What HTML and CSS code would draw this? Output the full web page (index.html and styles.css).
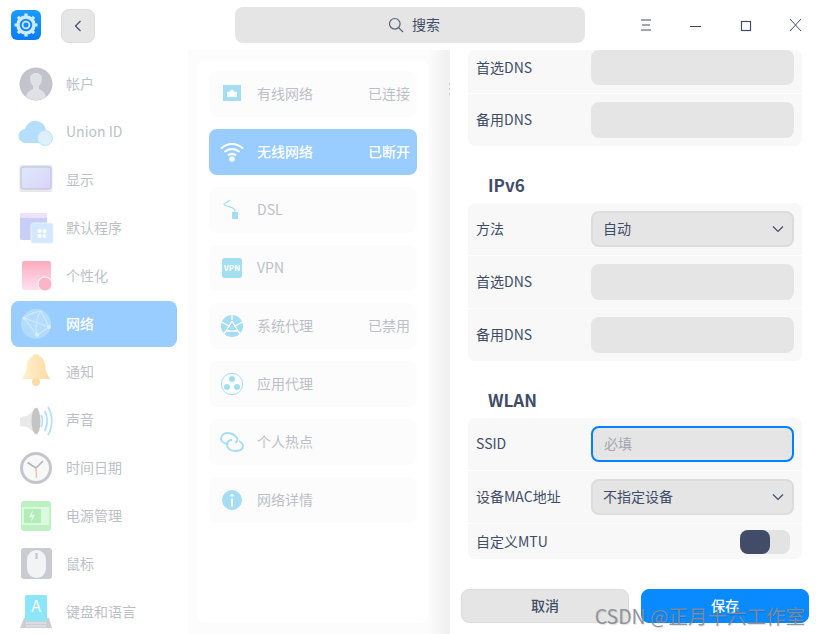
FILE: index.html
```html
<!DOCTYPE html>
<html lang="zh">
<head>
<meta charset="utf-8">
<title>控制中心</title>
<link rel="stylesheet" href="styles.css">
</head>
<body>
<div class="app">
  <header class="topbar">
    <svg class="logo" viewBox="0 0 30 30"><defs><linearGradient id="lg" x1="0" y1="0" x2="0" y2="1"><stop offset="0" stop-color="#1a9cff"/><stop offset="1" stop-color="#0a7cf5"/></linearGradient></defs><rect width="30" height="30" rx="6" fill="url(#lg)"/><g fill="none" stroke="#cfe9ff"><circle cx="15" cy="15" r="8" stroke-width="3.5"/><circle cx="15" cy="15" r="3.4" stroke-width="1.8"/><path d="M15 3.5v4M15 22.500v4M3.500 15h4M22.500 15h4M6.900 6.900l2.800 2.800M20.300 20.300l2.800 2.800M23.100 6.900l-2.800 2.800M9.700 20.300l-2.800 2.800" stroke-width="3.200"/></g></svg>
    <button class="back"><svg width="8" height="12" viewBox="0 0 8 12"><path d="M6.500 1L1.500 6l5 5" fill="none" stroke="#414d68" stroke-width="1.200"/></svg></button>
    <div class="search">
      <svg width="16" height="16" viewBox="0 0 16 16"><circle cx="6.800" cy="6.800" r="5.300" fill="none" stroke="#526078" stroke-width="1.200"/><path d="M10.600 10.600l4.400 4.400" stroke="#526078" stroke-width="1.200"/></svg>
      <span>搜索</span>
    </div>
    <div class="winbtns">
      <svg class="win" viewBox="0 0 50 20"><path d="M20 5h10M21 10h8M20 15h10" stroke="#414d68" fill="none"/></svg>
      <svg class="win" viewBox="0 0 50 20"><path d="M19 11.500h11" stroke="#414d68" fill="none"/></svg>
      <svg class="win" viewBox="0 0 50 20"><rect x="20.500" y="6.500" width="9" height="9" stroke="#414d68" stroke-width="1.200" fill="none"/></svg>
      <svg class="win" viewBox="0 0 50 20"><path d="M19 4l11 12M30 4L19 16" stroke="#414d68" fill="none"/></svg>
    </div>
  </header>
  <div class="body">
    <nav class="side">
      <div class="nav-item"><svg class="nav-ico" viewBox="0 0 36 36"><circle cx="18" cy="18" r="16.500" fill="#c3c4cb"/><path d="M8 31c1-6 5-7 7-8v-3c-2-2-3-5-3-8 0-3 3-5 6-5s6 2 6 5c0 3-1 6-3 8v3c2 1 6 2 7 8-3 2-6 3-10 3s-7-1-10-3z" fill="#e0e1e6"/></svg><span>帐户</span></div>
      <div class="nav-item"><svg class="nav-ico" viewBox="0 0 36 36"><path d="M8 29a7 7 0 0 1-1-14c2-6 7-9 12-8 5 1 9 5 9 10v12z" fill="#b4defb"/><circle cx="27" cy="24" r="7.500" fill="#dceffb" stroke="#c6e3f8"/></svg><span>Union ID</span></div>
      <div class="nav-item"><svg class="nav-ico" viewBox="0 0 36 36"><defs><linearGradient id="sc" x1="0" y1="0" x2="1" y2="1"><stop offset="0" stop-color="#dceafc"/><stop offset="1" stop-color="#ddd2f8"/></linearGradient></defs><rect x="1.500" y="3" width="33" height="27" rx="2" fill="#e8e8e8"/><rect x="3" y="5" width="30" height="22" rx="2" fill="url(#sc)" stroke="#b4c3da"/></svg><span>显示</span></div>
      <div class="nav-item"><svg class="nav-ico" viewBox="0 0 36 36"><rect x="2" y="3" width="27" height="27" rx="2" fill="#c9cef6"/><rect x="2" y="3" width="27" height="5" rx="2" fill="#eee2fb"/><rect x="13" y="13" width="22" height="20" rx="2.500" fill="#d3e8fc" stroke="#e6f1fc"/><g fill="#fff"><circle cx="21.500" cy="21" r="2"/><circle cx="26.500" cy="21" r="2"/><circle cx="21.500" cy="26" r="2"/><circle cx="26.500" cy="26" r="2"/></g></svg><span>默认程序</span></div>
      <div class="nav-item"><svg class="nav-ico" viewBox="0 0 36 36"><defs><linearGradient id="pe" x1="0" y1="0" x2="0" y2="1"><stop offset="0" stop-color="#fdaabc"/><stop offset=".3" stop-color="#fdbccf"/><stop offset="1" stop-color="#fee0f2"/></linearGradient></defs><rect x="4" y="3" width="29" height="29" rx="2" fill="url(#pe)"/><circle cx="27" cy="26" r="7" fill="#fcb4c6" stroke="#fff"/></svg><span>个性化</span></div>
      <div class="nav-item active"><svg class="nav-ico" viewBox="0 0 36 36"><circle cx="18" cy="18" r="15" fill="#b3dbfd"/><g fill="none" stroke="#cfe9fd" stroke-width="1.200"><path d="M6 12c6-5 12-6 17-7M6 12l13 17M6 12l25 9M31 21L19 29M23 5l8 16M23 5c-5 7-6 16-4 24"/></g><g fill="#d7eefc"><circle cx="31" cy="21" r="2"/><circle cx="19" cy="29" r="2"/><circle cx="6" cy="12" r="1.500"/></g></svg><span>网络</span></div>
      <div class="nav-item"><svg class="nav-ico" viewBox="0 0 36 36"><defs><linearGradient id="be" x1="0" y1="0" x2="1" y2="0"><stop offset="0" stop-color="#fff2cc"/><stop offset="1" stop-color="#fdd9a4"/></linearGradient></defs><path d="M18 0c2 0 3 1 3.500 2.500C26 4 27 9 27.500 14c.4 4 2 7 5 11H3.500c3-4 4.600-7 5-11C9 9 10 4 14.500 2.500 15 1 16 0 18 0z" fill="url(#be)"/><circle cx="18" cy="28" r="4" fill="#fddba6"/></svg><span>通知</span></div>
      <div class="nav-item"><svg class="nav-ico" viewBox="0 0 36 36"><path d="M2 15l7-1 11-9v28l-11-8-7-1z" fill="#e9e9e9"/><ellipse cx="18" cy="19" rx="4.500" ry="13" fill="#c4c4c4"/><path d="M23 13c2 3 2 9 0 12M26.500 9c3.500 5 3.500 15 0 20M30 5c5 8 5 20 0 28" fill="none" stroke="#b6e0fb" stroke-width="1.800"/></svg><span>声音</span></div>
      <div class="nav-item"><svg class="nav-ico" viewBox="0 0 36 36"><circle cx="18" cy="18" r="14.500" fill="#f8f8f9" stroke="#c4c5cc" stroke-width="3"/><path d="M9.500 12.500L18 18l7-7" fill="none" stroke="#b4b4b4" stroke-width="1.500"/><path d="M18 18l.5 10" stroke="#f5bfae" stroke-width="1.500"/></svg><span>时间日期</span></div>
      <div class="nav-item"><svg class="nav-ico" viewBox="0 0 36 36"><rect x="3" y="3" width="30" height="30" rx="3" fill="#bdf1c2"/><rect x="4" y="9" width="27" height="18" rx="1" fill="#dcf8df"/><rect x="6" y="11" width="17" height="14" fill="#b2ecb7"/><path d="M15 12l-4 7h3l-1 5 4-7h-3z" fill="#eefbef"/></svg><span>电源管理</span></div>
      <div class="nav-item"><svg class="nav-ico" viewBox="0 0 36 36"><rect x="3" y="2" width="31" height="31" rx="3" fill="#cacbd2"/><rect x="9" y="4" width="19" height="28" rx="9.500" fill="#f2f3f5"/><path d="M18.500 7v6" stroke="#c0c0c0" stroke-width="2"/></svg><span>鼠标</span></div>
      <div class="nav-item"><svg class="nav-ico" viewBox="0 0 36 36"><path d="M6 24h25l3 10H2z" fill="#cdced5"/><rect x="7" y="1" width="22" height="26" rx="2" fill="#8ae6f8"/><text class="key-a" x="18" y="18">A</text><path d="M8 29h20M8 32h20" stroke="#e0e1e5" stroke-width="1.500"/></svg><span>键盘和语言</span></div>
    </nav>
    <section class="mid">
      <div class="card">
        <div class="net-item"><svg class="net-ico" viewBox="0 0 24 24"><rect x="3" y="3" width="18" height="16" fill="#a5def3"/><path d="M7 15v-5l2 0 3-3 3 3 2 0v5z" fill="#fff"/></svg><span class="net-name">有线网络</span><span class="net-state">已连接</span></div>
        <div class="net-item active"><svg class="net-ico" viewBox="0 0 24 24"><g fill="none" stroke="#fff" stroke-width="2"><path d="M1 8.500c6.500-6 15.500-6 22 0"/><path d="M4.500 12c4.500-4 10.500-4 15 0"/><path d="M8 15.500c2.500-2 5.500-2 8 0"/></g><circle cx="12" cy="19" r="2.800" fill="#fff"/></svg><span class="net-name">无线网络</span><span class="net-state">已断开</span></div>
        <div class="net-item"><svg class="net-ico" viewBox="0 0 24 24"><path d="M10 2L4 6c0 3 8 2 10 5 1 1 1 2 1 3" fill="none" stroke="#a5def3" stroke-width="1.200"/><rect x="12" y="14" width="6" height="7" fill="#a5def3"/></svg><span class="net-name">DSL</span></div>
        <div class="net-item"><svg class="net-ico" viewBox="0 0 24 24"><rect x="2" y="2" width="20" height="20" rx="3" fill="#a5def3"/><text class="vpn" x="12" y="15">VPN</text></svg><span class="net-name">VPN</span></div>
        <div class="net-item"><svg class="net-ico" viewBox="0 0 24 24"><circle cx="12" cy="12" r="11" fill="#a5def3"/><path d="M12 1v5M12 7l-6 10M12 7l6 10M6 17h12M1.500 8L10 12.500M22.500 8L14 12.500M6 17l-2.500 3M18 17l2.500 3" stroke="#fff" stroke-width="1.300" fill="none"/></svg><span class="net-name">系统代理</span><span class="net-state">已禁用</span></div>
        <div class="net-item"><svg class="net-ico" viewBox="0 0 24 24"><circle cx="12" cy="12" r="10.700" fill="none" stroke="#a5def3"/><circle cx="12" cy="7" r="3" fill="#a5def3"/><circle cx="7" cy="15" r="3" fill="#a5def3"/><circle cx="17" cy="15" r="3" fill="#a5def3"/></svg><span class="net-name">应用代理</span></div>
        <div class="net-item"><svg class="net-ico" viewBox="0 0 24 24"><g fill="none" stroke="#a5def3" stroke-width="1.800"><path d="M8.500 14C4 14 1 11.500 1 8.500 1 5.500 4 3 7 3c4 0 8 2 10 5 1 2 0 4-2 5"/><path d="M12 10c-3 0-5 2-5 5s3 6 8 6 8-2 8-5c0-2-2-4-4-5"/></g></svg><span class="net-name">个人热点</span></div>
        <div class="net-item"><svg class="net-ico" viewBox="0 0 24 24"><circle cx="12" cy="12" r="10" fill="#a5def3"/><circle cx="12" cy="7.200" r="1.500" fill="#fff"/><rect x="11" y="10.500" width="2" height="8" fill="#fff"/></svg><span class="net-name">网络详情</span></div>
      </div>
      <div class="edge"><span class="peek"></span></div>
    </section>
    <main class="detail">
      <div class="group">
        <div class="row first"><label>首选DNS</label><div class="field"></div></div>
        <div class="row"><label>备用DNS</label><div class="field"></div></div>
      </div>
      <h2 class="title">IPv6</h2>
      <div class="group">
        <div class="row"><label>方法</label><div class="field select"><span>自动</span><svg width="12" height="8" viewBox="0 0 12 8"><path d="M1 1.500l5 5 5-5" fill="none" stroke="#414d68" stroke-width="1.200"/></svg></div></div>
        <div class="row"><label>首选DNS</label><div class="field"></div></div>
        <div class="row"><label>备用DNS</label><div class="field"></div></div>
      </div>
      <h2 class="title">WLAN</h2>
      <div class="group">
        <div class="row"><label>SSID</label><div class="field focus"><span>必填</span></div></div>
        <div class="row"><label>设备MAC地址</label><div class="field select"><span>不指定设备</span><svg width="12" height="8" viewBox="0 0 12 8"><path d="M1 1.500l5 5 5-5" fill="none" stroke="#414d68" stroke-width="1.200"/></svg></div></div>
        <div class="row last"><label>自定义MTU</label><div class="switch"><div class="thumb"></div></div></div>
      </div>
      <div class="actions">
        <button class="btn">取消</button>
        <button class="btn primary">保存</button>
      </div>
    </main>
  </div>
  <div class="watermark">CSDN @正月十六工作室</div>
</div>
</body>
</html>
```
FILE: styles.css
```css
* { box-sizing: border-box; }
html, body { margin: 0; padding: 0; }
body { font-family: "Noto Sans CJK SC", "Noto Sans", sans-serif; font-size: 14px; line-height: 20px; background: #fff; color: #414d68; overflow: hidden; }
.app { position: relative; width: 820px; height: 634px; overflow: hidden; display: flex; flex-direction: column; }
.topbar { height: 50px; display: flex; align-items: center; background: #fff; flex: none; }
.logo { width: 30px; height: 30px; margin-left: 11px; flex: none; }
.back { width: 34px; height: 34px; flex: none; margin-left: 20px; margin-top: 2px; border: 1px solid #dcdcdc; border-radius: 8px; background: #e6e6e6; display: flex; align-items: center; justify-content: center; padding: 0; }
.search { width: 350px; height: 36px; flex: none; margin-left: 140px; padding-left: 8px; background: #e5e5e5; border-radius: 8px; display: flex; align-items: center; justify-content: center; gap: 8px; color: #414d68; }
.search span { margin-bottom: 2px; }
.winbtns { display: flex; flex: none; margin-left: 36px; }
.win { width: 50px; height: 20px; flex: none; }
.body { flex: 1; display: flex; min-height: 0; }
.side { width: 188px; flex: none; padding: 11px 11px 0; display: flex; flex-direction: column; gap: 2px; background: #fff; overflow: hidden; }
.nav-item { height: 46px; flex: none; border-radius: 8px; display: flex; align-items: center; gap: 12px; padding-left: 7px; color: #bcbfc9; }
.nav-item span { margin-bottom: 2px; }
.nav-item.active { background: #99ccff; color: #fff; font-weight: 500; }
.nav-ico { width: 36px; height: 36px; flex: none; }
.key-a { font-size: 16px; fill: #fff; text-anchor: middle; }
.mid { width: 262px; flex: none; display: flex; padding-left: 9px; background: #fcfcfc; }
.card { width: 231px; flex: none; margin: 10px 0 11px; background: #fff; border-radius: 8px; padding: 11px 11px 0 12px; display: flex; flex-direction: column; gap: 12px; }
.net-item { height: 46px; flex: none; width: 208px; border-radius: 8px; background: #fcfcfd; display: flex; align-items: center; padding: 0 7px 0 11px; color: #bcbfc9; }
.net-item span { margin-bottom: 2px; }
.net-item.active { background: #99ccff; color: #fff; font-weight: 500; }
.net-ico { width: 24px; height: 24px; flex: none; margin-right: 13px; }
.vpn { font-size: 8px; font-weight: 700; fill: #fff; text-anchor: middle; }
.net-name { flex: 1; }
.edge { flex: 1; position: relative; background: linear-gradient(90deg, #fcfcfc, #f0f0f0); }
.peek { position: absolute; right: 0; top: 33px; width: 1px; height: 15px; background: repeating-linear-gradient(180deg, #c9ccd3 0 2px, transparent 2px 5px); }
.detail { width: 370px; flex: none; background: #fff; padding: 0 18px; position: relative; }
.group { background: #f8f8f8; border-radius: 8px; display: flex; flex-direction: column; gap: 1px; background-clip: padding-box; }
.row { height: 52px; background: #f8f8f8; display: flex; align-items: center; justify-content: space-between; padding: 0 8px; box-shadow: 0 1px 0 #fff; }
.row label { margin-bottom: 2px; }
.row:first-child { border-radius: 8px 8px 0 0; }
.row:last-child { border-radius: 0 0 8px 8px; box-shadow: none; }
.row.first { height: 43px; align-items: flex-start; }
.row.first label { margin-top: 7px; }
.row.last { height: 35px; padding-right: 12px; }
.field { width: 203px; height: 36px; border-radius: 8px; background: #e5e5e5; display: flex; align-items: center; justify-content: space-between; padding: 0 10px 0 12px; flex: none; }
.field span { margin-bottom: 2px; }
.row.first .field { height: 35px; }
.select { border: 2px solid #dcdcdc; padding-left: 10px; padding-right: 8px; }
.focus { border: 2px solid #0081ff; padding-left: 11px; color: #a2a6b0; }
.title { height: 57px; margin: 0; padding: 27px 0 0 20px; font-size: 17px; line-height: 24px; font-weight: 700; color: #414d68; }
.switch { width: 50px; height: 24px; background: #e3e3e3; border-radius: 8px; }
.thumb { width: 30px; height: 24px; background: #414d68; border-radius: 8px; }
.actions { display: flex; gap: 12px; margin: 30px -7px 0; }
.btn { width: 168px; height: 34px; border: 1px solid #dcdcdc; border-radius: 8px; background: #e5e5e5; color: #414d68; font: 500 14px/20px "Noto Sans CJK SC", sans-serif; padding: 0 0 3px; }
.btn.primary { background: #0a8aff; border-color: #0a8aff; color: #fff; }
.watermark { position: absolute; right: 15px; top: 603px; font-size: 19.500px; line-height: 26px; color: rgba(135,140,148,.92); text-shadow: 1px 1px 1px rgba(0,0,0,.12); white-space: nowrap; }
```
